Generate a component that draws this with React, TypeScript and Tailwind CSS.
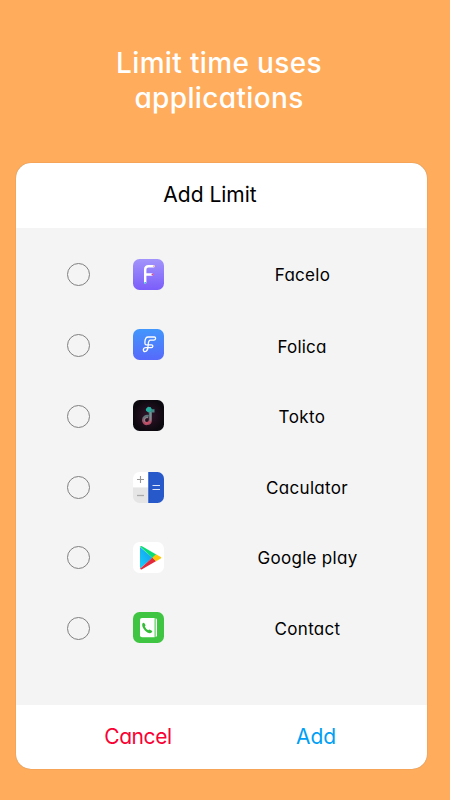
import type { ReactNode } from 'react'

function FaceloIcon() {
  return (
    <svg viewBox="0 0 31 31" className="size-[31px]" fill="none">
      <defs>
        <linearGradient id="facelo" x1="0" y1="0" x2="0" y2="1">
          <stop offset="0" stopColor="#a294fb" />
          <stop offset="1" stopColor="#7b5dfa" />
        </linearGradient>
      </defs>
      <rect width="31" height="31" rx="6.5" fill="url(#facelo)" />
      <path
        d="M12.2 23.5V10.5Q12.2 7.2 15.5 7.2H20.5M12.2 15.5H19"
        stroke="#fff"
        strokeWidth="2.4"
        strokeLinecap="round"
      />
      <circle cx="20.8" cy="7.2" r="0.9" fill="#f5b5a5" />
      <circle cx="19.4" cy="15.5" r="0.9" fill="#ee3a78" />
      <circle cx="12.2" cy="23.8" r="0.9" fill="#22b6c8" />
    </svg>
  )
}

function FolicaIcon() {
  return (
    <svg viewBox="0 0 31 31" className="size-[31px]" fill="none">
      <defs>
        <linearGradient id="folica" x1="0" y1="0" x2="0" y2="1">
          <stop offset="0" stopColor="#4297fc" />
          <stop offset="1" stopColor="#5769fb" />
        </linearGradient>
      </defs>
      <rect width="31" height="31" rx="6.5" fill="url(#folica)" />
      <path
        d="M17.5 11.2H20.8C22.9 11.2 23.2 8 21.4 8H15.2C12.4 8 12 10.4 11.9 13C11.8 15 12.2 15.9 13.5 15.9H18.6C20.4 15.9 20.2 18.7 18.4 18.7H12.8C9.7 18.7 9.6 22.6 12 22.6C14.8 22.6 15 19.5 15.2 15.5C15.4 12.5 15.6 11.2 17.5 11.2Z"
        stroke="#fff"
        strokeWidth="1.3"
        strokeLinejoin="round"
      />
    </svg>
  )
}

function ToktoIcon() {
  return (
    <svg viewBox="0 0 31 31" className="size-[31px]" fill="none">
      <defs>
        <radialGradient id="tokto-bg">
          <stop offset="0" stopColor="#32142a" />
          <stop offset="1" stopColor="#0d0910" />
        </radialGradient>
        <linearGradient id="tokto-note" x1="0" y1="0" x2="0" y2="1">
          <stop offset="0" stopColor="#3c8f8c" />
          <stop offset="0.5" stopColor="#60777c" />
          <stop offset="1" stopColor="#a94b63" />
        </linearGradient>
      </defs>
      <rect width="31" height="31" rx="6.5" fill="url(#tokto-bg)" />
      <path
        d="M17.4 8.5V19.8C17.4 24.6 10.6 24.8 10.6 20.2C10.6 17.2 13 16 15.4 16.5M18.2 10.8H21.5"
        stroke="url(#tokto-note)"
        strokeWidth="3.2"
      />
      <path d="M12.8 9L15 6.8L18 7.3V11L15.4 12.4L13 10.8Z" fill="#25ad9e" />
      <path
        d="M17.4 12V19.8C17.4 24 11.4 24.2 11.3 20.2C11.3 18.2 13 17.3 15 17.7"
        stroke="#a79a9f"
        strokeWidth="0.6"
      />
      <path d="M12.3 22.6C14 23.6 16.2 22.8 16.9 21" stroke="#d34864" strokeWidth="1.3" />
    </svg>
  )
}

function CalculatorIcon() {
  return (
    <svg viewBox="0 0 31 31" className="size-[31px]" fill="none">
      <defs>
        <clipPath id="calc">
          <rect width="31" height="31" rx="6.5" />
        </clipPath>
      </defs>
      <g clipPath="url(#calc)">
        <path d="M0 0H15.5V15.5H0Z" fill="#fff" />
        <path d="M0 15.5H15.5V31H0Z" fill="#e5e5e5" />
        <path d="M15.5 0H31V31H15.5Z" fill="#2859cb" />
        <path d="M16 0V31" stroke="#1b4fc5" />
      </g>
      <path d="M4 7.5H11M7.5 4V11" stroke="#999" strokeWidth="1.1" />
      <path d="M4 23.5H11" stroke="#aaa" strokeWidth="1.3" />
      <path d="M19.5 13.5H27M19.5 17.5H27" stroke="#dce5fa" strokeWidth="1.2" />
    </svg>
  )
}

function PlayIcon() {
  return (
    <svg viewBox="0 0 31 31" className="size-[31px]" fill="none">
      <defs>
        <linearGradient id="play" x1="1" y1="0" x2="0" y2="1">
          <stop offset="0" stopColor="#1597ec" />
          <stop offset="1" stopColor="#16cff9" />
        </linearGradient>
      </defs>
      <rect width="31" height="31" rx="6.5" fill="#fff" />
      <path d="M7 5V26.5L19.5 15.7Z" fill="url(#play)" />
      <path d="M7 4.6Q7.8 3.6 9 4.2L23.3 12.6L19.5 15.9Z" fill="#0bdd76" />
      <path d="M7 26.8Q7.8 27.8 9 27.2L23.3 19L19.5 15.6Z" fill="#e32a3b" />
      <path d="M23 12.3L27.8 15.1Q28.8 15.8 27.8 16.4L23 19.3L19.3 15.8Z" fill="#fdc60b" />
    </svg>
  )
}

function ContactIcon() {
  return (
    <svg viewBox="0 0 31 31" className="size-[31px]" fill="none">
      <rect width="31" height="31" rx="6.5" fill="#3fc541" />
      <path d="M9 6H21.6V25.2H9Q7 25.2 7 23.2V8Q7 6 9 6Z" fill="#fff" />
      <path d="M22.6 6.3Q24 6.3 24 8V23.3Q24 25 22.6 25Z" fill="#fff" />
      <path
        d="M9.4 11.4Q10.7 10.2 11.4 11.2L12.5 13Q12.6 13.8 11.8 14.4Q12.8 17 15.3 18.2Q16.3 17.3 17 17.7L19.2 19.1Q19.6 19.9 18.3 20.8C16.6 21.8 13.8 20.5 11.9 18.4C9.7 16 8.6 13 9.4 11.4Z"
        fill="#35bd38"
      />
    </svg>
  )
}

type AppItem = { name: string; icon: ReactNode; row: string; iconBox?: string; label: string }

const apps: AppItem[] = [
  { name: 'Facelo', icon: <FaceloIcon />, row: 'h-[71px]', label: 'tracking-[0.3px] pl-px' },
  { name: 'Folica', icon: <FolicaIcon />, row: 'h-[71px]', iconBox: 'pb-0.5', label: 'tracking-[0.2px] pt-0.5' },
  { name: 'Tokto', icon: <ToktoIcon />, row: 'h-[71px]', iconBox: 'pb-0.5', label: 'tracking-[0.4px] pt-px' },
  { name: 'Caculator', icon: <CalculatorIcon />, row: 'h-[70px]', label: 'tracking-[0.3px] pt-px pl-[10px]' },
  { name: 'Google play', icon: <PlayIcon />, row: 'h-[71px]', label: 'tracking-[0.3px] pl-[11px]' },
  { name: 'Contact', icon: <ContactIcon />, row: 'h-[71px]', iconBox: 'pb-[3px]', label: 'tracking-[0.3px] pt-px pl-[11px]' },
]

function AppRow({ item }: { item: AppItem }) {
  return (
    <label className={`flex items-center pl-[51px] ${item.row}`}>
      <input
        type="checkbox"
        className="size-[23px] appearance-none rounded-full border border-[#808080]"
      />
      <span className={`ml-[43px] ${item.iconBox ?? ''}`}>{item.icon}</span>
      <span className={`ml-[68px] w-[140px] text-center text-[17px] leading-6 ${item.label}`}>
        {item.name}
      </span>
    </label>
  )
}

export default function App() {
  return (
    <main className="flex h-[800px] w-[450px] flex-col bg-[#ffac5c] pt-[46px] font-['Inter','Liberation_Sans',sans-serif] text-black [font-feature-settings:'cv11']">
      <h1 className="h-[117px] pr-[12px] text-center text-[28px] leading-[35px] font-[450] tracking-[0.35px] text-white">
        Limit time uses
        <br />
        applications
      </h1>

      <section className="ml-4 flex h-[606px] w-[411px] flex-col overflow-hidden rounded-[15px] bg-white shadow-[0_0_1px_rgba(0,0,0,0.35)]">
        <h2 className="h-[65px] pr-[23px] text-center text-[21px] leading-[64px]">Add Limit</h2>
        <div className="h-[477px] bg-[#f4f4f4] pt-[11px]">
          {apps.map((item) => (
            <AppRow key={item.name} item={item} />
          ))}
        </div>
        <div className="flex h-16 items-center text-[21px]">
          <button className="ml-[72px] w-[100px] tracking-[-0.4px] text-[#fb0032]">Cancel</button>
          <button className="ml-[78px] w-[100px] text-[#009ff5]">Add</button>
        </div>
      </section>
    </main>
  )
}
